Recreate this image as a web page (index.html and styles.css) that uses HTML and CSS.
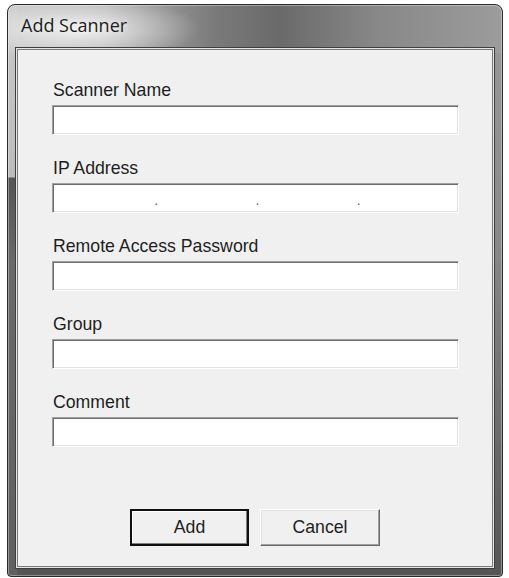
FILE: index.html
```html
<!DOCTYPE html>
<html>
<head>
<meta charset="utf-8">
<title>Add Scanner</title>
<link rel="stylesheet" href="styles.css">
</head>
<body>
<div class="window">
  <div class="titlebar"><span class="title">Add Scanner</span></div>
  <div class="client">
    <div class="field">
      <label class="label">Scanner Name</label>
      <div class="input"></div>
    </div>
    <div class="field">
      <label class="label">IP Address</label>
      <div class="input ip">
        <span class="seg"><span class="dot">.</span></span>
        <span class="seg"><span class="dot">.</span></span>
        <span class="seg"><span class="dot">.</span></span>
        <span class="seg"></span>
      </div>
    </div>
    <div class="field">
      <label class="label">Remote Access Password</label>
      <div class="input"></div>
    </div>
    <div class="field">
      <label class="label">Group</label>
      <div class="input"></div>
    </div>
    <div class="field">
      <label class="label">Comment</label>
      <div class="input"></div>
    </div>
    <div class="buttons">
      <button class="btn default">Add</button>
      <button class="btn">Cancel</button>
    </div>
  </div>
</div>
</body>
</html>
```
FILE: styles.css
```css
html, body {
  margin: 0;
  padding: 0;
  background: #ffffff;
}

.window {
  box-sizing: border-box;
  margin: 4px 6px 0 7px;
  height: 573px;
  border: 1px solid #2a2a2a;
  border-radius: 8px 8px 4px 4px;
  padding: 0 9px 9px 9px;
  display: flex;
  flex-direction: column;
  background:
    radial-gradient(ellipse 120px 34px at 72px 24px, rgba(255,255,255,0.8), rgba(255,255,255,0) 100%),
    linear-gradient(to bottom, #c8c8c8 0, #bcbcbc 172px, #555555 173px, #6a6a6a 260px, #606060 100%) left top / 9px 100% no-repeat,
    linear-gradient(to right, #c6c6c6 0, #b0b0b0 20%, #7a7a7a 42%, #6a6a6a 55%, #888888 75%, #9c9c9c 100%) left top / 100% 48px no-repeat,
    linear-gradient(to bottom, #9a9a9a 0, #8a8a8a 40%, #666666 80%, #555555 100%);
  box-shadow: inset 0 0 0 1px rgba(255,255,255,0.35);
}

.titlebar {
  height: 44px;
  box-sizing: border-box;
  padding: 9px 0 0 4px;
}

.title {
  font-family: "Open Sans", "Noto Sans", sans-serif;
  font-size: 18px;
  line-height: 22px;
  color: #1c1c1c;
  text-shadow: 0 0 6px rgba(255,255,255,0.85);
}

.client {
  flex: 1;
  background: #f0f0f0;
  border: 1px solid #7a7a7a;
  box-shadow: 0 0 0 1px #e6e6e6, 0 0 0 2px #3e3e3e;
  padding: 30px 33px 0 34px;
  display: flex;
  flex-direction: column;
  font-family: "Liberation Sans", Arial, sans-serif;
  font-size: 17.7px;
  color: #1e1e1e;
}

.field {
  display: flex;
  flex-direction: column;
  margin-bottom: 23px;
}

.label {
  display: block;
  line-height: 20px;
  height: 20px;
  margin-bottom: 5px;
  padding-left: 1px;
}

.input {
  box-sizing: border-box;
  width: 407px;
  height: 30px;
  background: #ffffff;
  border-style: solid;
  border-width: 1px;
  border-color: #a0a0a0 #ffffff #ffffff #a0a0a0;
  box-shadow: inset 1px 1px 0 #6d6d6d, inset -1px -1px 0 #e3e3e3;
}

.ip {
  display: flex;
  align-items: center;
}

.seg {
  flex: 1;
  display: flex;
  justify-content: flex-end;
  line-height: 20px;
}

.dot {
  font-size: 14px;
  color: #666666;
  transform: translate(4px, 2px);
}

.buttons {
  margin-top: 39px;
  display: flex;
  justify-content: center;
  gap: 11px;
  padding-right: 1px;
}

.btn {
  box-sizing: border-box;
  width: 120px;
  height: 37px;
  background: #f0f0f0;
  font-family: "Liberation Sans", Arial, sans-serif;
  font-size: 17.7px;
  color: #1e1e1e;
  border-style: solid;
  border-width: 1px;
  border-color: #ffffff #696969 #696969 #ffffff;
  box-shadow: inset -1px -1px 0 #a0a0a0, inset 1px 1px 0 #e3e3e3;
  padding: 0;
  margin: 0;
}

.btn.default {
  width: 119px;
  border: 2px solid #101010;
  box-shadow: inset -1px -1px 0 #808080, inset 1px 1px 0 #ffffff;
}
```
